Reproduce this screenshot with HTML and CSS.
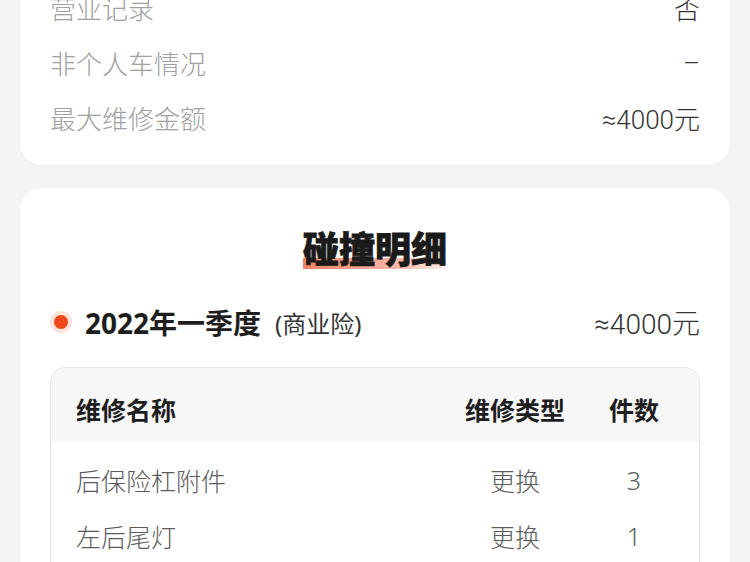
FILE: index.html
```html
<!DOCTYPE html>
<html lang="zh-CN">
<head>
<meta charset="utf-8">
<title>碰撞明细</title>
<link rel="stylesheet" href="styles.css">
</head>
<body>
<div class="page">
  <section class="card info-card">
    <div class="info-row"><span class="label">营业记录</span><span class="value">否</span></div>
    <div class="info-row"><span class="label">非个人车情况</span><span class="value">–</span></div>
    <div class="info-row"><span class="label">最大维修金额</span><span class="value">≈4000元</span></div>
  </section>

  <section class="card detail-card">
    <h2 class="title"><span class="title-text">碰撞明细</span></h2>
    <div class="period">
      <span class="dot"></span>
      <span class="period-name">2022年一季度</span>
      <span class="period-type">(商业险)</span>
      <span class="period-amount">≈4000元</span>
    </div>
    <div class="table">
      <div class="thead">
        <span class="c1">维修名称</span>
        <span class="c2">维修类型</span>
        <span class="c3">件数</span>
      </div>
      <div class="tbody">
        <div class="trow">
          <span class="c1">后保险杠附件</span>
          <span class="c2">更换</span>
          <span class="c3">3</span>
        </div>
        <div class="trow">
          <span class="c1">左后尾灯</span>
          <span class="c2">更换</span>
          <span class="c3">1</span>
        </div>
      </div>
    </div>
  </section>
</div>
</body>
</html>
```
FILE: styles.css
```css
html, body {
  margin: 0;
  padding: 0;
  overflow: hidden;
  background: #f4f4f5;
}
body {
  font-family: "Noto Sans", "Noto Sans CJK SC", sans-serif;
  color: #333;
}
.page {
  padding: 0 20px;
  margin-top: -40px;
}
.card {
  background: #fff;
  border-radius: 22px;
  box-shadow: 0 2px 6px rgba(0, 0, 0, 0.02);
}
.info-card {
  padding: 20px 30px;
}
.info-row {
  display: flex;
  justify-content: space-between;
  align-items: center;
  height: 55px;
  font-size: 26px;
}
.label {
  color: #a0a0a0;
  font-weight: 300;
}
.value {
  font-family: "Roboto", "Noto Sans CJK SC", sans-serif;
  color: #333;
  font-weight: 300;
}
.detail-card {
  margin-top: 23px;
  padding: 37px 30px 30px;
}
.title {
  margin: 0;
  text-align: center;
  font-size: 36px;
  line-height: 50px;
  font-weight: 900;
  color: #1a1a1a;
}
.title-text {
  display: inline-block;
  line-height: 50px;
  -webkit-text-stroke: 0.8px #1a1a1a;
  background: linear-gradient(90deg, rgba(240, 88, 48, 0.75), rgba(245, 120, 90, 0.5) 70%, rgba(250, 160, 140, 0.12)) no-repeat left 33px / 100% 11px;
}
.period {
  display: flex;
  align-items: center;
  height: 40px;
  margin-top: 27px;
}
.dot {
  width: 22px;
  height: 22px;
  border-radius: 50%;
  background: #fde3da;
  display: flex;
  align-items: center;
  justify-content: center;
  margin-right: 13px;
}
.dot::before {
  content: "";
  width: 14px;
  height: 14px;
  border-radius: 50%;
  background: #f0481a;
}
.period-name {
  font-size: 28px;
  font-weight: 700;
  color: #1e1e1e;
}
.period-type {
  font-size: 24px;
  font-weight: 400;
  color: #333;
  margin-left: 14px;
}
.period-amount {
  font-family: "Roboto", "Noto Sans CJK SC", sans-serif;
  margin-left: auto;
  font-size: 28px;
  font-weight: 300;
  color: #333;
}
.table {
  margin-top: 25px;
  border: 1px solid #e6e6e8;
  border-bottom: none;
  border-radius: 16px 16px 0 0;
  overflow: hidden;
}
.thead, .trow {
  display: grid;
  grid-template-columns: 1fr 108px 130px;
  align-items: center;
}
.thead {
  background: #f7f7f8;
  padding: 29px 0 19px;
  line-height: 26px;
  font-size: 25px;
  font-weight: 700;
  color: #1e1e1e;
}
.tbody {
  padding-top: 10px;
}
.trow {
  height: 56px;
  font-size: 25px;
  font-weight: 300;
  color: #5c5c5c;
}
.c1 {
  padding-left: 25px;
}
.c2, .c3 {
  text-align: center;
}
```
